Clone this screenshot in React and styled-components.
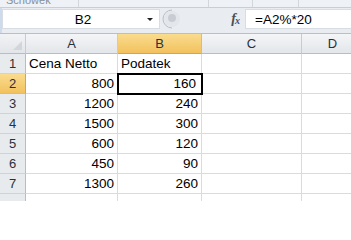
import styled, { createGlobalStyle } from "styled-components";

const GlobalStyle = createGlobalStyle`
    html, body {
        margin: 0;
        padding: 0;
        background: #ffffff;
        overflow: hidden;
    }
    body {
        font-family: "Liberation Sans", Arial, sans-serif;
    }
`;

const Window = styled.div`
    width: 351px;
    height: 201px;
    overflow: hidden;
    display: flex;
    flex-direction: column;
`;

const RibbonEdge = styled.div`
    height: 8px;
    flex: none;
    display: flex;
    background: #eef1f5;
    border-bottom: 1px solid #c7ced8;
    box-sizing: border-box;
`;

const RibbonGroup = styled.div`
    width: ${(p) => p.$w}px;
    flex: none;
    border-right: 1px solid #d2d7de;
    position: relative;
    overflow: hidden;
`;

const GroupLabel = styled.span`
    position: absolute;
    left: 6px;
    bottom: 1px;
    font-size: 11px;
    line-height: 11px;
    color: #8a8f96;
`;

const FormulaBar = styled.div`
    height: 25px;
    flex: none;
    display: flex;
    padding: 1px 0 4px 0;
    box-sizing: border-box;
    background: #e9edf2;
    border-left: 2px solid #cddbec;
`;

const NameBox = styled.div`
    width: 158px;
    flex: none;
    display: flex;
    align-items: center;
    background: #ffffff;
    border: 1px solid #d8dde4;
    box-sizing: border-box;
    font-size: 13.5px;
    color: #000;
`;

const NameText = styled.span`
    flex: 1;
    text-align: center;
    padding-left: 16px;
`;

const DropArrow = styled.span`
    width: 0;
    height: 0;
    margin-right: 6px;
    border-left: 3px solid transparent;
    border-right: 3px solid transparent;
    border-top: 3px solid #222;
`;

const Tools = styled.div`
    width: 85px;
    flex: none;
    display: flex;
    align-items: center;
    justify-content: space-between;
    padding: 0 6px 0 2px;
    box-sizing: border-box;
`;

const Fx = styled.span`
    font-family: "Liberation Serif", serif;
    font-style: italic;
    font-weight: bold;
    font-size: 14px;
    color: #4b4f55;
    letter-spacing: -1px;

    sub {
        font-size: 10px;
        vertical-align: -1px;
    }
`;

const FormulaInput = styled.div`
    flex: 1;
    display: flex;
    align-items: center;
    padding-left: 9px;
    background: #ffffff;
    border: 1px solid #d8dde4;
    border-right: none;
    font-size: 13.5px;
    color: #000;
`;

const Sheet = styled.div`
    display: grid;
    grid-template-columns: 26px 92px 84px 100px 62px;
    grid-auto-rows: 20px;
    border-top: 1px solid #b8bfc8;
    font-size: 13.5px;
`;

const HeadCell = styled.div`
    display: flex;
    align-items: center;
    justify-content: center;
    box-sizing: border-box;
    color: #27313c;
    background: ${(p) =>
        p.$active
            ? "linear-gradient(#f9dc8e, #f3c15d)"
            : "linear-gradient(#f4f5f7, #e3e6ea)"};
    border-right: 1px solid ${(p) => (p.$active ? "#f2b94c" : "#c8ccd2")};
    border-bottom: 1px solid ${(p) => (p.$active ? "#f29b36" : "#b8bdc4")};
    font-size: 13px;
`;

const Corner = styled(HeadCell)`
    position: relative;
    background: linear-gradient(#f2f3f5, #e2e5e9);

    &::after {
        content: "";
        position: absolute;
        right: 3px;
        bottom: 3px;
        border-left: 9px solid transparent;
        border-bottom: 9px solid #d2d5da;
    }
`;

const RowHead = styled(HeadCell)`
    background: ${(p) =>
        p.$active ? "linear-gradient(#f9dc8e, #f3c15d)" : "#e8ebee"};
    border-right: 1px solid ${(p) => (p.$active ? "#f29b36" : "#b8bdc4")};
    border-bottom: 1px solid ${(p) => (p.$active ? "#f2b94c" : "#cfd3d8")};
`;

const Cell = styled.div`
    display: flex;
    align-items: center;
    justify-content: ${(p) => (p.$num ? "flex-end" : "flex-start")};
    padding: 0 3px;
    box-sizing: border-box;
    border-right: 1px solid #d9dbde;
    border-bottom: 1px solid #d9dbde;
    color: #000;
    white-space: nowrap;
    position: relative;
    ${(p) =>
        p.$selected &&
        `
        outline: 2px solid #000;
        outline-offset: -1px;
        z-index: 1;
        padding-right: 5px;
    `}
`;

const columns = ["A", "B", "C", "D"];

const rows = [
    ["Cena Netto", "Podatek"],
    [800, 160],
    [1200, 240],
    [1500, 300],
    [600, 120],
    [450, 90],
    [1300, 260],
    ["", ""],
];

function Row({ index, values }) {
    const n = index + 1;
    return (
        <>
            {/* the 8th row is only peeking in at the bottom edge */}
            <RowHead $active={n === 2}>{n < 8 ? n : ""}</RowHead>
            {values.map((v, j) => (
                <Cell
                    key={j}
                    $num={typeof v === "number"}
                    $selected={n === 2 && j === 1}
                >
                    {v}
                </Cell>
            ))}
            <Cell />
            <Cell />
        </>
    );
}

function App() {
    return (
        <Window>
            <GlobalStyle />
            <RibbonEdge>
                <RibbonGroup $w={78}>
                    <GroupLabel>Schowek</GroupLabel>
                </RibbonGroup>
                <RibbonGroup $w={129} />
                <RibbonGroup $w={43} />
                <RibbonGroup $w={45} />
            </RibbonEdge>
            <FormulaBar>
                <NameBox>
                    <NameText>B2</NameText>
                    <DropArrow />
                </NameBox>
                <Tools>
                    <svg width="20" height="20" viewBox="0 0 20 20">
                        <path
                            d="M10 1 A9 9 0 0 0 10 19"
                            fill="none"
                            stroke="#b9bec6"
                            strokeWidth="1"
                        />
                        <circle cx="10" cy="10" r="8" fill="#e3e6ea" />
                        <circle cx="10" cy="9" r="4" fill="#c9cdd3" />
                    </svg>
                    <Fx>
                        f<sub>x</sub>
                    </Fx>
                </Tools>
                <FormulaInput>=A2%*20</FormulaInput>
            </FormulaBar>
            <Sheet>
                <Corner />
                {columns.map((c) => (
                    <HeadCell key={c} $active={c === "B"}>
                        {c}
                    </HeadCell>
                ))}
                {rows.map((r, i) => (
                    <Row key={i} index={i} values={r} />
                ))}
            </Sheet>
        </Window>
    );
}

export default App;
